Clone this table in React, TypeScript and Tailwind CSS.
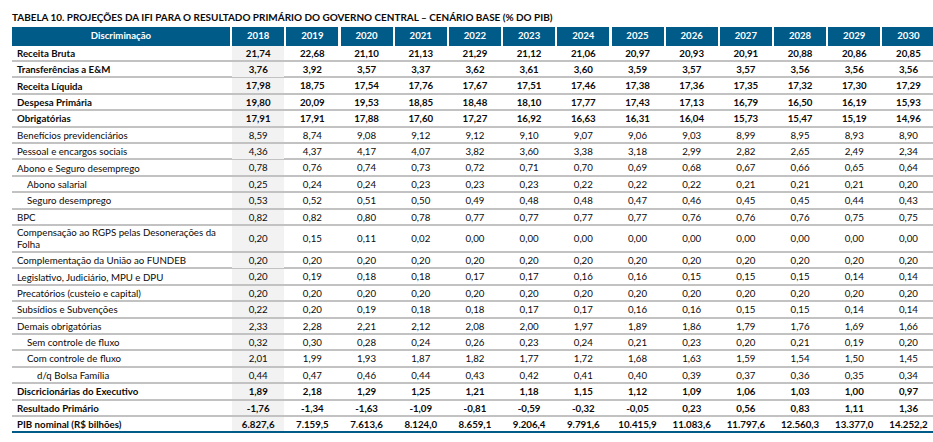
import React from "react";

type Row = { label: React.ReactNode; vals: string[]; bold?: boolean; indent?: 0 | 1 | 2; tall?: boolean };

const years = ["2018", "2019", "2020", "2021", "2022", "2023", "2024", "2025", "2026", "2027", "2028", "2029", "2030"];

const s = (t: string) => t.split(" ");

const rows: Row[] = [
  { label: "Receita Bruta", bold: true, vals: s("21,74 22,68 21,10 21,13 21,29 21,12 21,06 20,97 20,93 20,91 20,88 20,86 20,85") },
  { label: "Transferências a E&M", bold: true, vals: s("3,76 3,92 3,57 3,37 3,62 3,61 3,60 3,59 3,57 3,57 3,56 3,56 3,56") },
  { label: "Receita Líquida", bold: true, vals: s("17,98 18,75 17,54 17,76 17,67 17,51 17,46 17,38 17,36 17,35 17,32 17,30 17,29") },
  { label: "Despesa Primária", bold: true, vals: s("19,80 20,09 19,53 18,85 18,48 18,10 17,77 17,43 17,13 16,79 16,50 16,19 15,93") },
  { label: "Obrigatórias", bold: true, vals: s("17,91 17,91 17,88 17,60 17,27 16,92 16,63 16,31 16,04 15,73 15,47 15,19 14,96") },
  { label: "Benefícios previdenciários", vals: s("8,59 8,74 9,08 9,12 9,12 9,10 9,07 9,06 9,03 8,99 8,95 8,93 8,90") },
  { label: "Pessoal e encargos sociais", vals: s("4,36 4,37 4,17 4,07 3,82 3,60 3,38 3,18 2,99 2,82 2,65 2,49 2,34") },
  { label: "Abono e Seguro desemprego", vals: s("0,78 0,76 0,74 0,73 0,72 0,71 0,70 0,69 0,68 0,67 0,66 0,65 0,64") },
  { label: "Abono salarial", indent: 1, vals: s("0,25 0,24 0,24 0,23 0,23 0,23 0,22 0,22 0,22 0,21 0,21 0,21 0,20") },
  { label: "Seguro desemprego", indent: 1, vals: s("0,53 0,52 0,51 0,50 0,49 0,48 0,48 0,47 0,46 0,45 0,45 0,44 0,43") },
  { label: "BPC", vals: s("0,82 0,82 0,80 0,78 0,77 0,77 0,77 0,77 0,76 0,76 0,76 0,75 0,75") },
  {
    label: (
      <>
        Compensação ao RGPS pelas Desonerações da
        <br />
        Folha
      </>
    ),
    tall: true,
    vals: s("0,20 0,15 0,11 0,02 0,00 0,00 0,00 0,00 0,00 0,00 0,00 0,00 0,00"),
  },
  { label: "Complementação da União ao FUNDEB", vals: s("0,20 0,20 0,20 0,20 0,20 0,20 0,20 0,20 0,20 0,20 0,20 0,20 0,20") },
  { label: "Legislativo, Judiciário, MPU e DPU", vals: s("0,20 0,19 0,18 0,18 0,17 0,17 0,16 0,16 0,15 0,15 0,15 0,14 0,14") },
  { label: "Precatórios (custeio e capital)", vals: s("0,20 0,20 0,20 0,20 0,20 0,20 0,20 0,20 0,20 0,20 0,20 0,20 0,20") },
  { label: "Subsídios e Subvenções", vals: s("0,22 0,20 0,19 0,18 0,18 0,17 0,17 0,16 0,16 0,15 0,15 0,14 0,14") },
  { label: "Demais obrigatórias", vals: s("2,33 2,28 2,21 2,12 2,08 2,00 1,97 1,89 1,86 1,79 1,76 1,69 1,66") },
  { label: "Sem controle de fluxo", indent: 1, vals: s("0,32 0,30 0,28 0,24 0,26 0,23 0,24 0,21 0,23 0,20 0,21 0,19 0,20") },
  { label: "Com controle de fluxo", indent: 1, vals: s("2,01 1,99 1,93 1,87 1,82 1,77 1,72 1,68 1,63 1,59 1,54 1,50 1,45") },
  { label: "d/q Bolsa Família", indent: 2, vals: s("0,44 0,47 0,46 0,44 0,43 0,42 0,41 0,40 0,39 0,37 0,36 0,35 0,34") },
  { label: "Discricionárias do Executivo", bold: true, vals: s("1,89 2,18 1,29 1,25 1,21 1,18 1,15 1,12 1,09 1,06 1,03 1,00 0,97") },
  { label: "Resultado Primário", bold: true, vals: s("-1,76 -1,34 -1,63 -1,09 -0,81 -0,59 -0,32 -0,05 0,23 0,56 0,83 1,11 1,36") },
  {
    label: "PIB nominal (R$ bilhões)",
    bold: true,
    vals: s("6.827,6 7.159,5 7.613,6 8.124,0 8.659,1 9.206,4 9.791,6 10.415,9 11.083,6 11.797,6 12.560,3 13.377,0 14.252,2"),
  },
];

const grid = "grid grid-cols-[218px_repeat(13,52px)] gap-x-[2.2px]";

export default function App() {
  return (
    <div className="w-[933px] h-[442px] overflow-hidden bg-white text-[#0a0a0a]" style={{ fontFamily: "Lato, 'Liberation Sans', sans-serif" }}>
      <div className="pl-[12px] pt-[9px]">
        <div className="text-[9.95px] font-bold leading-[16px] h-[18px] whitespace-nowrap">
          TABELA 10. PROJEÇÕES DA IFI PARA O RESULTADO PRIMÁRIO DO GOVERNO CENTRAL – CENÁRIO BASE (% DO PIB)
        </div>
        <div className="w-[925px]">
          <div className={`${grid} h-[18.7px] text-white font-bold text-[9.6px]`}>
            <div className="bg-[#015b88] flex items-center justify-center">Discriminação</div>
            {years.map((y) => (
              <div key={y} className="bg-[#015b88] flex items-center justify-center">
                {y}
              </div>
            ))}
          </div>
          {rows.map((r, i) => {
            const last = i === rows.length - 1;
            return (
              <div
                key={i}
                className={`${grid} text-[9.7px] ${r.bold ? "font-bold" : "font-normal"} ${
                  last ? "border-b-2 border-[#015b88]" : "border-b-2 border-[#c2c2c2]"
                } ${r.tall ? "h-[27px]" : "h-[16.4px]"}`}
              >
                <div
                  className={`flex items-center whitespace-nowrap leading-[12.3px] ${
                    r.indent === 1 ? "pl-[15px]" : r.indent === 2 ? "pl-[25px]" : "pl-[5px]"
                  }`}
                >
                  <span>{r.label}</span>
                </div>
                {r.vals.map((v, j) => (
                  <div key={j} className={`flex items-center justify-center ${j === 0 ? "bg-[#f2f2f2]" : ""}`}>
                    {v}
                  </div>
                ))}
              </div>
            );
          })}
        </div>
      </div>
    </div>
  );
}
